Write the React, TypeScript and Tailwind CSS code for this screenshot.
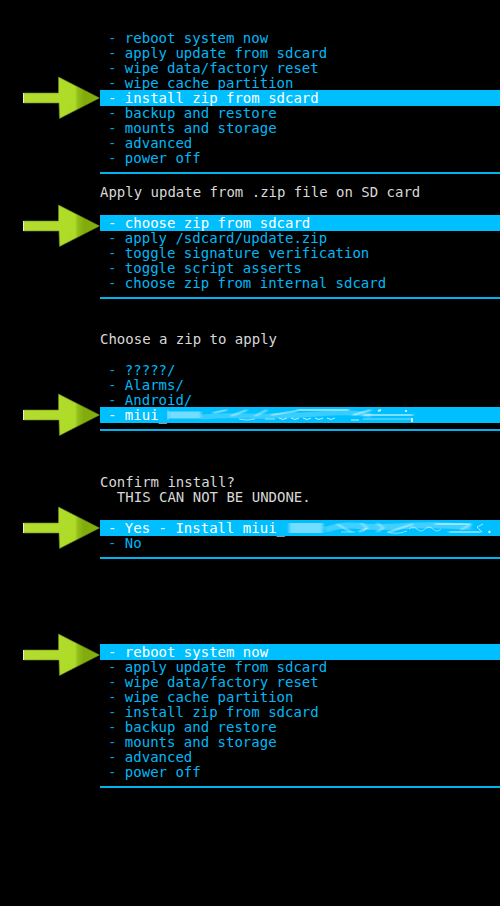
import React from "react"

type Item = { label: string; smudge?: "file" | "confirm" }

const MAIN_MENU: Item[] = [
  { label: "reboot system now" },
  { label: "apply update from sdcard" },
  { label: "wipe data/factory reset" },
  { label: "wipe cache partition" },
  { label: "install zip from sdcard" },
  { label: "backup and restore" },
  { label: "mounts and storage" },
  { label: "advanced" },
  { label: "power off" },
]

const ZIP_MENU: Item[] = [
  { label: "choose zip from sdcard" },
  { label: "apply /sdcard/update.zip" },
  { label: "toggle signature verification" },
  { label: "toggle script asserts" },
  { label: "choose zip from internal sdcard" },
]

const FILE_MENU: Item[] = [
  { label: "?????/" },
  { label: "Alarms/" },
  { label: "Android/" },
  { label: "miui_", smudge: "file" },
]

const CONFIRM_MENU: Item[] = [
  { label: "Yes - Install miui_", smudge: "confirm" },
  { label: "No" },
]

const Arrow = ({ low }: { low?: boolean }) => (
  <svg
    viewBox="0 0 78 44"
    className={`absolute right-full h-11 w-[78px] -translate-y-1/2 ${low ? "top-3/4" : "top-1/2"}`}
    aria-hidden="true"
  >
    <defs>
      <linearGradient id="arrow-fill" x1="0" x2="1" y1="0" y2="0">
        <stop offset="0" stopColor="#b3dc30" />
        <stop offset="0.68" stopColor="#aedb27" />
        <stop offset="0.71" stopColor="#93c01a" />
        <stop offset="0.8" stopColor="#80ab0c" />
        <stop offset="1" stopColor="#86b30c" />
      </linearGradient>
    </defs>
    <path
      d="M1.5 17H36.5V1L77.5 22L37.5 42.5L37 27H1.5Z"
      fill="url(#arrow-fill)"
      stroke="#6d8a2a"
      strokeWidth="0.6"
    />
    <path d="M1.5 17V27" stroke="#e8f0d0" strokeWidth="1" />
  </svg>
)

// rubbed out part of the file name
const Smudge = ({ kind }: { kind: "file" | "confirm" }) => (
  <svg
    viewBox={kind === "file" ? "0 0 250 16" : "0 0 200 16"}
    className={`h-4 shrink-0 ${kind === "file" ? "w-[250px]" : "w-[200px]"}`}
    aria-hidden="true"
  >
    <defs>
      <filter id="smear" x="-5%" y="-50%" width="110%" height="200%">
        <feGaussianBlur stdDeviation="1.6 0.7" />
      </filter>
    </defs>
    {kind === "file" ? (
      <g fill="none" stroke="#fff">
        <g filter="url(#smear)">
          <path d="M1 8H34" strokeWidth="7" opacity="0.45" />
          <path d="M34 10Q60 8 84 9T150 7T204 9" strokeWidth="5" opacity="0.22" />
          <path d="M46 6L60 3M64 9L80 3M88 9L100 3M104 8L130 4" strokeWidth="2" opacity="0.45" />
          <path d="M130 3H182M186 8L204 3M196 8H246" strokeWidth="2" opacity="0.5" />
        </g>
        <path d="M1 3V13" opacity="0.4" />
        <path d="M72 12q8 2 16 0M98 12h10" opacity="0.6" />
        <path d="M112 11q4 3 8 0M124 11q4 3 8 0M136 11q4 3 8 0M148 11q4 3 8 0M160 11q4 3 8 0M184 13h8" opacity="0.75" />
        <path d="M196 12H246" opacity="0.5" />
        <path d="M211 4l3-1M238 4h2M245 11v4" strokeWidth="2" opacity="0.8" />
      </g>
    ) : (
      <g fill="none" stroke="#fff">
        <g filter="url(#smear)">
          <path d="M4 8H38" strokeWidth="10" opacity="0.45" />
          <path d="M40 10Q56 4 74 6T120 6T186 7" strokeWidth="6" opacity="0.25" />
          <path d="M52 4L66 12M76 3l6 5l-8 4M92 3l6 5l-6 4M104 12L128 4" strokeWidth="2" opacity="0.45" />
          <path d="M150 4H186M164 12H196M186 4L176 10" strokeWidth="2" opacity="0.45" />
        </g>
        <path d="M56 12h14M82 8l-4 3M102 12q10 3 20-1" opacity="0.5" />
        <path d="M124 9q4-4 8 0t8 0t8 0t8 0" opacity="0.5" />
        <path d="M198 4l-6 3l5 5" opacity="0.6" />
      </g>
    )}
  </svg>
)

type MenuProps = { items: Item[]; selected: number; lowArrow?: boolean }

const Menu = ({ items, selected, lowArrow }: MenuProps) => (
  <ul className="border-b-2 border-[#00b4f0] pb-[7px]">
    {items.map((item, index) => {
      const active = index === selected
      return (
        <li key={item.label} className="relative h-[15px]">
          {active && <Arrow low={lowArrow} />}
          <button
            type="button"
            className={`flex w-full whitespace-pre pl-2 text-left leading-[17px] ${
              active ? "h-4 bg-[#00bfff] text-white" : "h-[15px] text-[#00b8f5]"
            }`}
          >
            <span className={active ? "text-white" : "text-[#009fd6]"}>- </span>
            {item.label}
            {item.smudge && <Smudge kind={item.smudge} />}
            {item.smudge === "confirm" && <span>.</span>}
          </button>
        </li>
      )
    })}
  </ul>
)

const App = () => {
  return (
    <main className="min-h-screen overflow-x-hidden bg-black pt-[30px] pb-28 pl-[100px] font-['DejaVu_Sans_Mono',monospace] text-[14px] leading-[15px] text-[#d8d8d8]">
      <section>
        <Menu items={MAIN_MENU} selected={4} />
      </section>
      <section className="pt-[11px]">
        <h2 className="pb-[15px]">Apply update from .zip file on SD card</h2>
        <Menu items={ZIP_MENU} selected={0} lowArrow />
      </section>
      <section className="pt-[33px]">
        <h2 className="pb-[15px]">Choose a zip to apply</h2>
        <Menu items={FILE_MENU} selected={3} />
      </section>
      <section className="pt-11">
        <h2>Confirm install?</h2>
        <p className="whitespace-pre pb-[15px]">{"  THIS CAN NOT BE UNDONE."}</p>
        <Menu items={CONFIRM_MENU} selected={0} />
      </section>
      <section className="pt-[85px]">
        <Menu items={MAIN_MENU} selected={0} lowArrow />
      </section>
    </main>
  )
}

export default App
